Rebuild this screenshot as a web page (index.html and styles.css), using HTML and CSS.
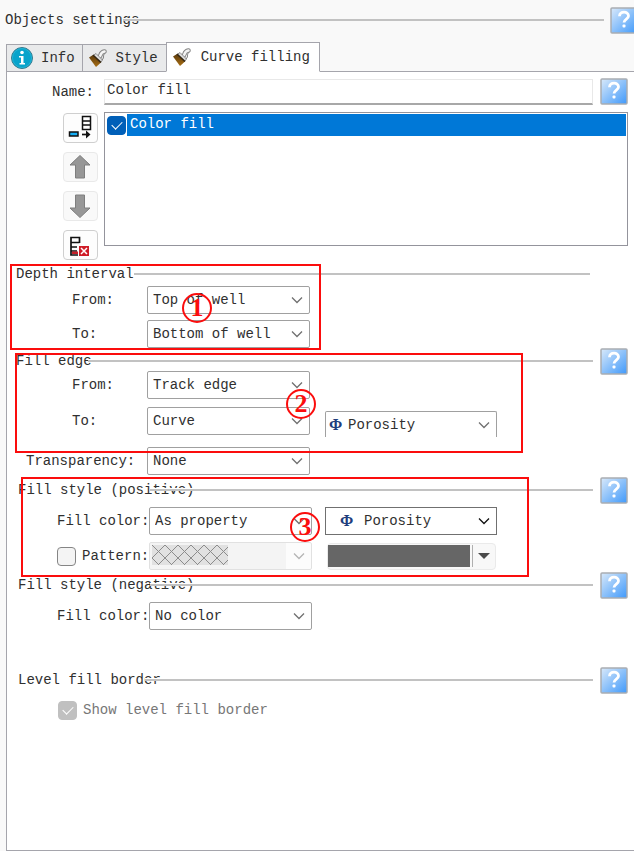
FILE: index.html
```html
<!DOCTYPE html>
<html lang="en">
<head>
<meta charset="utf-8">
<title>Objects settings</title>
<link rel="stylesheet" href="styles.css">
</head>
<body>
<svg class="defs" aria-hidden="true">
  <defs>
    <linearGradient id="helpfill" x1="0" y1="0" x2="1" y2="1">
      <stop offset="0" stop-color="#d9e9fa"/><stop offset=".5" stop-color="#8cc1fa"/><stop offset="1" stop-color="#3f99fb"/>
    </linearGradient>
    <linearGradient id="bristle" x1="0" y1="0" x2="0" y2="1">
      <stop offset="0" stop-color="#5c3b0c"/><stop offset="1" stop-color="#a86e14"/>
    </linearGradient>
    <pattern id="hatch" width="13" height="13" patternUnits="userSpaceOnUse">
      <path d="M0 0L13 13M13 0L0 13" stroke="#8c8c8c" fill="none"/>
    </pattern>
    <symbol id="help" viewBox="0 0 28 27">
      <rect x="1" y="1" width="26" height="25" rx="1" fill="url(#helpfill)" stroke="#a9adb3" stroke-width="1.5"/>
      <path d="M9.500 9.300C9.500 3.800 18.500 3.800 18.500 9c0 3-4.500 3.200-4.500 6.500" fill="none" stroke="#fff" stroke-width="2.800"/>
      <rect x="12.500" y="17.500" width="3" height="3" rx="1" fill="#fff"/>
    </symbol>
    <symbol id="chevron" viewBox="0 0 12 8"><path d="M1 1.500L6 6.500L11 1.500" fill="none" stroke="currentColor" stroke-width="1.300"/></symbol>
    <symbol id="brush" viewBox="0 0 20 20">
      <path d="M9 7L14 12C17 9 14 7 17.500 5" fill="none" stroke="#777" stroke-width="1"/>
      <path d="M10.500 9.500C14 8 11 4.500 16.500 3.500" fill="none" stroke="#858585" stroke-width="4.600" stroke-linecap="round"/>
      <path d="M10.500 9.500C14 8 11 4.500 16.500 3.500" fill="none" stroke="#f4f4f4" stroke-width="2.600" stroke-linecap="round"/>
      <path d="M5 7.500L8 5.500 14.500 12 12.500 14.500Z" fill="#ddd" stroke="#777" stroke-width=".8"/>
      <path d="M1 9.500L5 7 13 14.500 8 19Z" fill="url(#bristle)"/>
      <path d="M5 7L13 14.500" stroke="#332715" stroke-width="1.600"/>
    </symbol>
  </defs>
</svg>
<main class="window">
  <header class="title title-main">
    <h1>Objects settings</h1><span class="rule"></span>
    <button class="help" aria-label="Help"><svg><use href="#help"/></svg></button>
  </header>
  <div class="tabs" role="tablist">
    <button class="tab" role="tab">
      <svg class="tab-icon info" viewBox="0 0 24 24"><circle cx="12" cy="12" r="10.500" fill="#08a3cb" stroke="#39798d"/><circle cx="12" cy="12" r="9.500" fill="none" stroke="#25b4d3"/><circle cx="12" cy="6.500" r="1.800" fill="#fff"/><path d="M9 10h4.500v7H15v1.500H9.500V17H11v-5.500H9z" fill="#fff"/></svg>Info</button>
    <button class="tab" role="tab"><svg class="tab-icon"><use href="#brush"/></svg>Style</button>
    <button class="tab active" role="tab" aria-selected="true"><svg class="tab-icon"><use href="#brush"/></svg>Curve filling</button>
  </div>
  <section class="panel">
    <div class="name-row">
      <label for="name">Name:</label>
      <input id="name" class="name" type="text" value="Color fill">
      <button class="help" aria-label="Help"><svg><use href="#help"/></svg></button>
    </div>
    <div class="list-row">
      <div class="tools">
        <button class="tool" aria-label="Add"><svg viewBox="1 1 33 28"><path d="M19.500 3.500h8v13h-8zM19.500 8h8M19.500 12h8" fill="#fff" stroke="#111" stroke-width="1.500"/><path d="M6.500 19h8.500v4H6.500z" fill="#14aef5" stroke="#111" stroke-width="1.500"/><path d="M19 21.500h5" stroke="#111" stroke-width="1.700"/><path d="M23 17.500l4.500 4-4.500 4z" fill="#111"/></svg></button>
        <button class="tool off" aria-label="Move up" disabled><svg viewBox="1 1 33 28"><path d="M17 3.500L27 13h-5.500v13h-9V13H7z" fill="#979797" stroke="#7e7e7e"/></svg></button>
        <button class="tool off" aria-label="Move down" disabled><svg viewBox="1 1 33 28"><path d="M17 26.500L27 17h-5.500V4h-9v13H7z" fill="#979797" stroke="#7e7e7e"/></svg></button>
        <button class="tool" aria-label="Remove"><svg viewBox="1 1 33 28"><path d="M16.500 13V7.500H8V25h7M8 12.500h8.500M8 17h6M8 21h6" fill="none" stroke="#111" stroke-width="1.700"/><path d="M9 21.500h6V24H9z" fill="#c5202a"/><path d="M16 16h10v10H16z" fill="#cf1c27"/><path d="M18 18l6 6M24 18l-6 6" stroke="#fff" stroke-width="1.500"/></svg></button>
      </div>
      <div class="list">
        <div class="item">
          <input id="item" class="check" type="checkbox" checked><label for="item">Color fill</label>
        </div>
      </div>
    </div>

    <section class="group depth">
      <div class="title"><h2>Depth interval</h2><span class="rule rule-short"></span></div>
      <div class="row"><label for="dfrom">From:</label><span class="combo"><select id="dfrom"><option>Top of well</option></select><svg><use href="#chevron"/></svg></span></div>
      <div class="row"><label for="dto">To:</label><span class="combo"><select id="dto"><option>Bottom of well</option></select><svg><use href="#chevron"/></svg></span></div>
      <div class="frame"></div><span class="mark">1</span>
    </section>

    <section class="group edge">
      <div class="title"><h2>Fill edge</h2><span class="rule"></span><button class="help" aria-label="Help"><svg><use href="#help"/></svg></button></div>
      <div class="row"><label for="efrom">From:</label><span class="combo"><select id="efrom"><option>Track edge</option></select><svg><use href="#chevron"/></svg></span></div>
      <div class="row"><label for="eto">To:</label><span class="combo"><select id="eto"><option>Curve</option></select><svg><use href="#chevron"/></svg></span>
        <span class="combo property open"><select aria-label="Curve"><option>Porosity</option></select><b class="phi">Φ</b><svg><use href="#chevron"/></svg></span></div>
      <div class="row transparency"><label for="trans">Transparency:</label><span class="combo"><select id="trans"><option>None</option></select><svg><use href="#chevron"/></svg></span></div>
      <div class="frame"></div><span class="mark">2</span>
    </section>

    <section class="group positive wide">
      <div class="title"><h2>Fill style (positive)</h2><span class="rule rule-deep"></span><button class="help" aria-label="Help"><svg><use href="#help"/></svg></button></div>
      <div class="row"><label for="pfill">Fill color:</label><span class="combo"><select id="pfill"><option>As property</option></select><svg><use href="#chevron"/></svg></span>
        <span class="combo property strong"><select aria-label="Property"><option>Porosity</option></select><b class="phi">Φ</b><svg><use href="#chevron"/></svg></span></div>
      <div class="row"><span class="tick"><input id="pattern" class="check" type="checkbox"><label for="pattern">Pattern:</label></span>
        <span class="combo disabled"><select aria-label="Pattern" disabled><option></option></select><svg class="swatch"><rect width="100%" height="100%" fill="#e1e1e1"/><rect width="100%" height="100%" fill="url(#hatch)"/></svg><svg><use href="#chevron"/></svg></span>
        <button class="color" aria-label="Pattern color"><span class="chip"></span><svg viewBox="0 0 12 7"><path d="M0 0h12L6 6z" fill="#4a4a4a"/></svg></button></div>
      <div class="frame"></div><span class="mark">3</span>
    </section>

    <section class="group negative wide">
      <div class="title"><h2>Fill style (negative)</h2><span class="rule rule-deep"></span><button class="help" aria-label="Help"><svg><use href="#help"/></svg></button></div>
      <div class="row"><label for="nfill">Fill color:</label><span class="combo"><select id="nfill"><option>No color</option></select><svg><use href="#chevron"/></svg></span></div>
    </section>

    <section class="group level wide">
      <div class="title"><h2>Level fill border</h2><span class="rule"></span><button class="help" aria-label="Help"><svg><use href="#help"/></svg></button></div>
      <div class="tick muted"><input id="show" class="check" type="checkbox" checked disabled><label for="show">Show level fill border</label></div>
    </section>
  </section>
</main>
</body>
</html>
```
FILE: styles.css
```css
* { box-sizing: border-box; }
body {
  margin: 0;
  background: #f9f9f9;
  color: #303030;
  font: 14px/20px "Liberation Mono", monospace;
  overflow-x: hidden;
}
button, input, select { font: inherit; color: inherit; margin: 0; }
button { padding: 0; border: 0; background: none; }
svg { display: block; }
h1, h2 { margin: 0; font: inherit; white-space: nowrap; }
.defs { position: absolute; width: 0; height: 0; }
.window { min-height: 100vh; display: flex; flex-direction: column; overflow: hidden; }

/* Section titles with a rule running to the right */
.title { display: flex; align-items: center; height: 20px; padding: 0 6px 0 11px; }
.title-main { margin: 10px 0 12px; padding: 0 0 0 5px; }
.title-main .help { margin-right: -4px; }
.rule {
  flex: 1;
  height: 2px;
  margin: 0 7px 0 -16px;
  background: #c2c2c2;
  box-shadow: 0 -1px #fff;
  z-index: 1;
}
.title-main .rule { box-shadow: 0 -1px #f9f9f9; margin-right: 6px; }
.rule-short { margin: 0 38px 0 0; }
.edge .rule { margin-left: -4px; }
.rule-deep { margin-left: -44px; }
.help, .help svg { width: 28px; height: 27px; flex: none; }

/* Tabs */
.tabs { display: flex; align-items: flex-end; padding-left: 6px; margin-bottom: -1px; z-index: 1; }
.tab {
  display: flex;
  align-items: center;
  gap: 7px;
  height: 28px;
  padding: 0 7px 0 3px;
  border: 1px solid #a5a5ac;
  border-right: 0;
  background: #e9eaeb;
}
.tab + .tab { gap: 8px; padding: 0 8px 0 5px; }
.tab.active { height: 30px; padding-right: 9px; gap: 9px; border-right: 1px solid #a5a5ac; border-bottom-color: #fff; background: #fff; }
.tab-icon { width: 20px; height: 20px; }
.tab-icon.info { width: 24px; height: 24px; }

.panel {
  flex: 1;
  margin-left: 6px;
  padding-top: 6px;
  border: 1px solid #a5a5ac;
  border-right: 0;
  background: #fff;
}
.name-row { display: flex; align-items: center; gap: 7px; padding-right: 6px; }
.name-row label { width: 90px; padding-left: 45px; white-space: nowrap; }
.name {
  flex: 1;
  min-width: 0;
  height: 26px;
  padding: 0 2px 2px;
  border: 1px solid #e8e8e8;
  border-bottom: 2px solid #a8a8a8;
  background: #fff;
}
.list-row { display: flex; gap: 6px; padding: 7px 6px 0 56px; }
.tools { display: flex; flex-direction: column; gap: 9px; padding-top: 1px; }
.tool { width: 35px; height: 30px; border: 1px solid #cfcfcf; border-radius: 4px; background: #fdfdfd; }
.tool svg { width: 33px; height: 28px; }
.tool.off { border-color: #e9e9e9; background: #f9f9f9; }
.list { flex: 1; height: 134px; padding: 1px; border: 1px solid #94949c; }
.item { display: flex; align-items: center; gap: 1px; padding-left: 1px; }
.item label { flex: 1; height: 22px; padding-left: 3px; background: #0078d7; color: #fff; }

/* Check boxes */
.check {
  appearance: none;
  flex: none;
  width: 19px;
  height: 19px;
  border: 1px solid #858585;
  border-radius: 4px;
  background: #f4f4f4;
  display: grid;
  place-content: center;
}
.check:checked { border-color: #005fb8; background: #005fb8; }
.check:checked::before {
  content: "";
  width: 9px;
  height: 5px;
  border: solid #fff;
  border-width: 0 0 1px 1px;
  transform: translateY(-1px) rotate(-45deg);
}
.check:disabled { border-color: #c0c0c0; background: #c0c0c0; }
.tick { display: flex; align-items: center; gap: 6px; }
.muted { color: #777; }

/* Form rows */
.group { position: relative; }
.row { display: flex; align-items: center; }
.row > label { width: 140px; padding-left: 65px; white-space: nowrap; }
.combo { position: relative; width: 163px; height: 28px; }
.combo select {
  appearance: none;
  width: 100%;
  height: 100%;
  padding: 0 24px 0 5px;
  border: 1px solid #a0a0a0;
  border-radius: 2px;
  background: #fff;
}
.combo > svg { position: absolute; right: 7px; top: 10px; width: 12px; height: 8px; color: #707070; pointer-events: none; }
.property { width: 172px; margin-left: 15px; }
.property select { padding-left: 22px; }
.phi { position: absolute; left: 4px; top: 4px; color: #213d7c; font: bold 16px/20px "Liberation Serif", serif; pointer-events: none; }
.open { height: 26px; align-self: flex-end; margin: 4px 0 -2px 15px; }
.open select { border-bottom: 0; border-radius: 2px 2px 0 0; }
.strong { margin-left: 13px; }
.strong select { padding-left: 38px; border-color: #707070; border-radius: 0; }
.strong .phi { left: 15px; }
.strong > svg { color: #111; }
.disabled select { border-color: #d5d5d5; background: linear-gradient(90deg, #f0f0f0 136px, #fcfcfc 136px); }
.disabled > svg { color: #b5b5b5; }
.combo > .swatch { left: 3px; top: 3px; width: 76px; height: 20px; }
.color {
  display: flex;
  align-items: center;
  width: 169px;
  height: 27px;
  margin-left: 15px;
  border: 1px solid #eaeaea;
  border-radius: 4px;
  background: #f8f8f8;
}
.chip { width: 145px; height: 22px; border-right: 1px solid #b0b0b0; background: linear-gradient(90deg, #666 142px, #f8f8f8 142px); }
.color svg { width: 12px; height: 7px; margin-left: 5px; }

.depth { margin-top: 4px; padding-bottom: 3px; }
.depth .title, .edge .title { padding-left: 9px; }
.depth .title { margin-bottom: 2px; }
.depth .row + .row { margin-top: 6px; }
.edge .row + .row { margin-top: 8px; }
.edge .row.transparency { margin-top: 12px; }
.transparency > label { padding-left: 19px; }
.wide { padding-top: 5px; }
.wide .row > label, .wide .row > .tick { width: 142px; padding-left: 50px; }
.wide .row { margin-top: 7px; }
.level { padding-top: 40px; }
.level > .tick { margin-top: 10px; padding-left: 51px; }

/* Callouts drawn over the form */
.frame { position: absolute; z-index: 2; border: 2px solid #fb0d0d; pointer-events: none; }
.mark {
  position: absolute;
  z-index: 2;
  width: 30px;
  height: 30px;
  border: 2px solid #fb0d0d;
  border-radius: 50%;
  color: #fb0d0d;
  font: bold 26px/26px "Liberation Serif", serif;
  text-align: center;
  pointer-events: none;
}
.depth .frame { left: 3px; top: 0; width: 311px; height: 86px; }
.depth .mark { left: 175px; top: 29px; }
.edge .frame { left: 8px; top: 2px; width: 508px; height: 100px; }
.edge .mark { left: 279px; top: 38px; }
.positive .frame { left: 14px; top: 2px; width: 508px; height: 100px; }
.positive .mark { left: 283px; top: 37px; }
```
